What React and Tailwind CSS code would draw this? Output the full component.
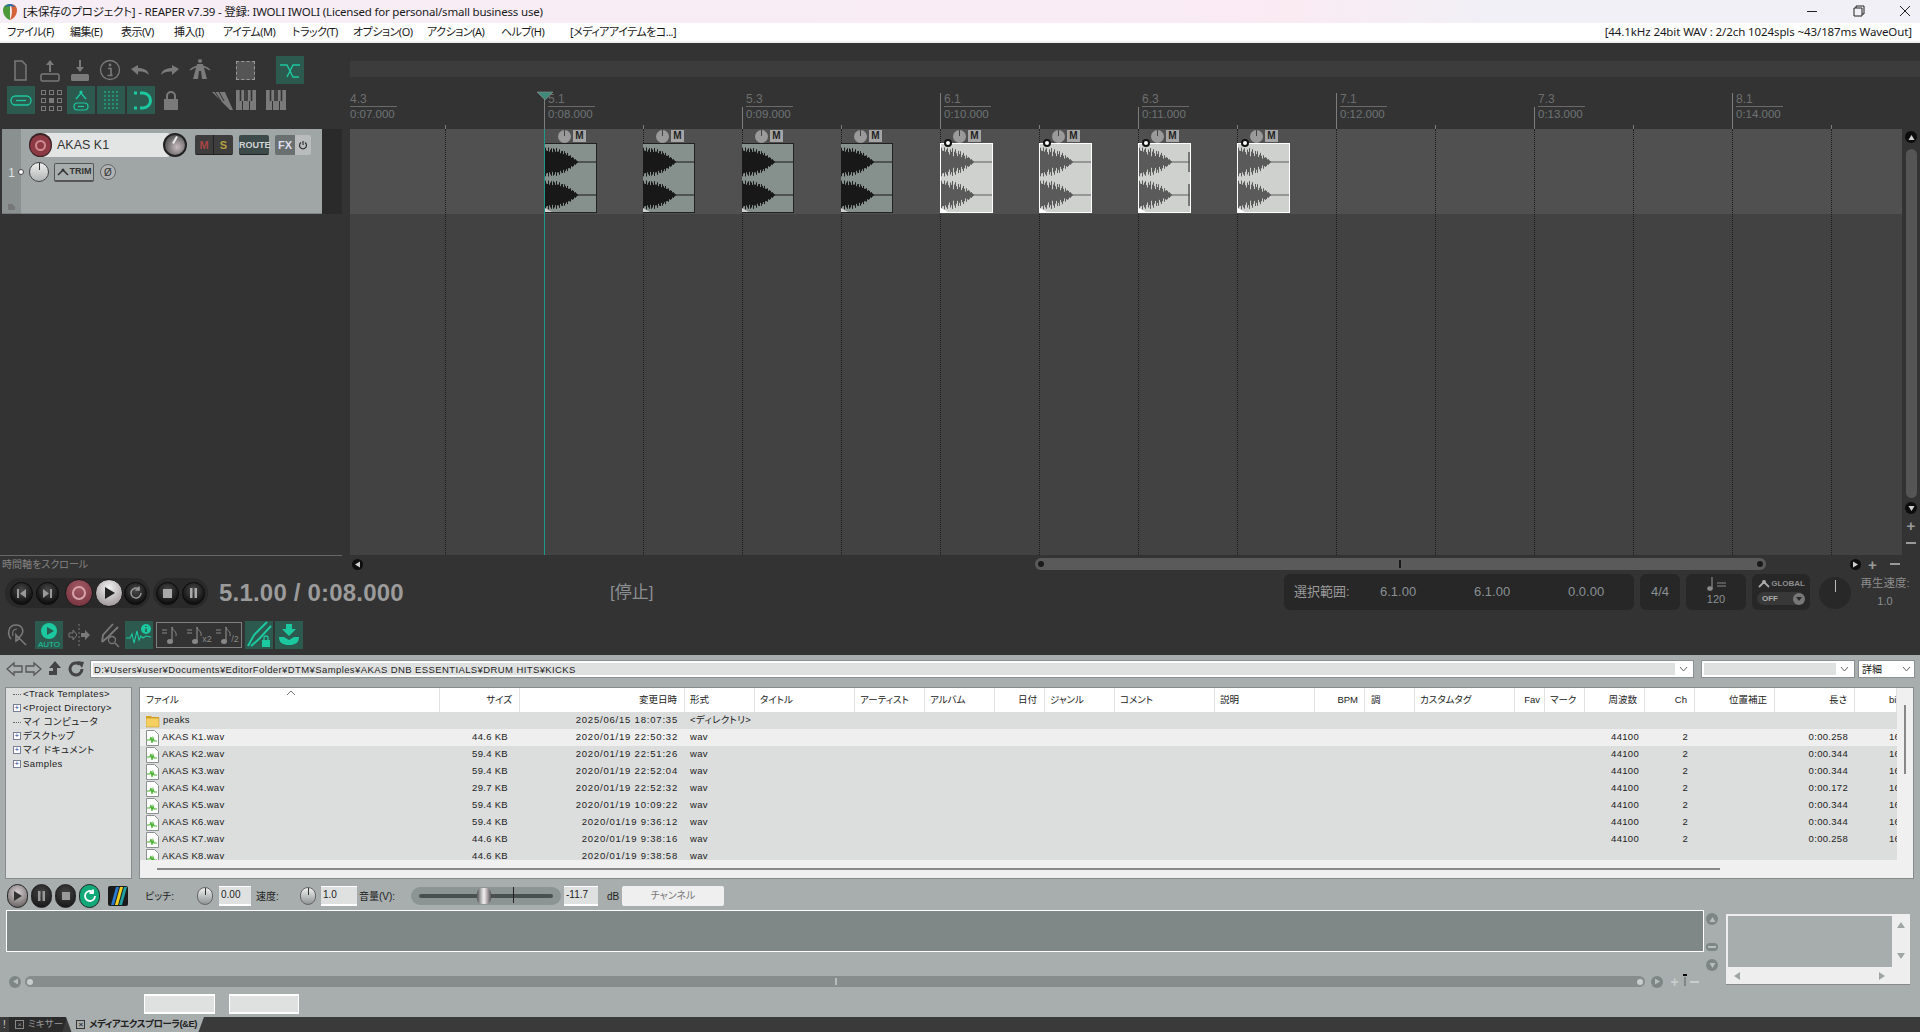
import React from "react";

const TEAL = "#1cc8a0";
const GR = "#7a7a7a";

function Slot({ w = "w-[30px]", active, children }) {
  return (
    <div className={`${w} h-[28px] flex items-center justify-center shrink-0`}>
      <div className={`w-[28px] h-[28px] flex items-center justify-center ${active ? "bg-[#2c5a4f]" : ""}`}>{children}</div>
    </div>
  );
}
const S = ({ children, w = 24, h = 24 }) => (
  <svg width={w} height={h} viewBox={`0 0 ${w} ${h}`} fill="none">{children}</svg>
);

function Row1() {
  return (
    <div className="flex h-[28px] pl-[5px]">
      <Slot><S><path d="M7 3h7l4 4v15H7z" stroke={GR} strokeWidth="1.5" fill="#3a3a3a" /></S></Slot>
      <Slot><S><path d="M12 2l-4 5h3v7h2V7h3z" fill={GR} /><rect x="3" y="16" width="18" height="7" rx="1.5" stroke={GR} strokeWidth="1.5" /></S></Slot>
      <Slot><S><path d="M12 14l-4-5h3V2h2v7h3z" fill={GR} /><rect x="3" y="16" width="18" height="7" rx="1.5" fill={GR} /></S></Slot>
      <Slot><S><circle cx="12" cy="12" r="9.5" stroke={GR} strokeWidth="1.3" /><circle cx="12" cy="7" r="1.4" fill={GR} /><path d="M10 10.5h3V17h1.5M9.5 17.5h5" stroke={GR} strokeWidth="1.6" /></S></Slot>
      <Slot><S><path d="M3 11l7-4v3c6 0 10 2 11 7-3-3-6-3.500-11-3.500V17z" fill={GR} /></S></Slot>
      <Slot><S><path d="M21 11l-7-4v3C8 10 4 12 3 17c3-3 6-3.500 11-3.500V17z" fill={GR} /></S></Slot>
      <Slot><S><path d="M9 6h6l4 15h-5l-1-8h-2l-1 8H5z" fill={GR} /><path d="M2 12c4-3 6-4 10-4s6 1 10 4" stroke={GR} strokeWidth="1.5" /><circle cx="12" cy="3" r="2" fill={GR} /></S></Slot>
      <div className="w-[30px] ml-[15px] h-[28px] flex items-center justify-center">
        <div className="w-[19px] h-[19px] bg-[#555] border border-dashed border-[#9a9a9a]" />
      </div>
      <div className="ml-[16px]"><Slot w="w-[28px]" active><S><path d="M2 7h7l6 12h6M22 7h-7L9 19" stroke={TEAL} strokeWidth="1.4" /></S></Slot></div>
    </div>
  );
}
function Row2() {
  return (
    <div className="flex h-[28px] pl-[6px] mt-[2px]">
      <Slot active><S><rect x="2" y="8" width="20" height="9" rx="4.500" stroke={TEAL} strokeWidth="1.3" /><path d="M7 12.500h10" stroke={TEAL} strokeWidth="1.3" /></S></Slot>
      <Slot>
        <div className="grid grid-cols-3 gap-[3px]">
          {[0, 1, 2, 3, 4, 5, 6, 7, 8].map((i) => (
            <div key={i} className={`w-[5px] h-[5px] border border-[#7a7a7a] ${i === 4 ? "bg-[#7a7a7a]" : ""}`} />
          ))}
        </div>
      </Slot>
      <Slot active><S><path d="M7 11l5-6 5 6" stroke={TEAL} strokeWidth="1.4" /><circle cx="12" cy="4" r="1.6" fill={TEAL} /><rect x="5" y="15" width="14" height="7" rx="3.500" stroke={TEAL} strokeWidth="1.2" /><path d="M9 18.500h6" stroke={TEAL} strokeWidth="1.2" /></S></Slot>
      <Slot active><S>{[6, 10, 14, 18].map((x) => <path key={x} d={`M${x} 3v18`} stroke={TEAL} strokeWidth="1" strokeDasharray="2 2" />)}</S></Slot>
      <Slot active><S><path d="M11 5h3a7.500 7.500 0 010 15h-3" stroke={TEAL} strokeWidth="3" /><path d="M5 5h3M5 20h3" stroke={TEAL} strokeWidth="3" /></S></Slot>
      <Slot><S><path d="M8 11V8a4 4 0 018 0v3" stroke={GR} strokeWidth="2" /><rect x="5" y="11" width="14" height="11" fill={GR} /></S></Slot>
      <div className="ml-[24px] w-[24px] h-[28px] flex items-center justify-center">
        <S><path d="M2 4h13l8 18h-3z" fill={GR} /><path d="M5 4l6 9M9 4l5 9" stroke="#333" strokeWidth="1" /></S>
      </div>
      <Piano />
      <div className="w-[6px]" />
      <Piano />
    </div>
  );
}
const Piano = () => (
  <div className="w-[24px] h-[28px] flex items-center justify-center">
    <S w={20} h={22}><rect x="0" y="1" width="20" height="20" fill={GR} /><path d="M6.500 21V12M13.500 21V12" stroke="#333" /><path d="M4.500 1v11M9 1v11M11 1v11M15.500 1v11" stroke="#333" strokeWidth="1.600" /></S>
  </div>
);

function TrackPanel() {
  return (
    <div className="flex h-[85px]">
      <div className="ml-[2px] w-[320px] bg-[#a0a6a6] flex">
        <div className="w-[19px] bg-[#8a9090] flex flex-col items-center justify-end pb-[2px] border-b border-[#777]">
          <span className="text-[#dfe3e3] text-[12px] mt-[35px] mb-auto">1</span>
          <svg width="10" height="8"><path d="M1 1h4l3 3v3H1z" fill="#777" /></svg>
        </div>
        <div className="flex-1 pt-[4px] border-b border-[#808686]">
          <div className="flex items-center h-[24px]">
            <div className="relative w-[130px] h-[24px] ml-[19px] bg-[#e3e5e4] rounded-r-[3px] flex items-center pl-[17px] text-[12.500px] text-[#333] shrink-0">AKAS K1</div>
            <div className="-ml-[141px] w-[23px] h-[24px] z-10 rounded-full bg-[#3a2226] flex items-center justify-center shrink-0">
              <div className="w-[21px] h-[21px] rounded-full bg-[#8e3a44] flex items-center justify-center">
                <div className="w-[11px] h-[11px] rounded-full border-2 border-[#cf8a92]" />
              </div>
            </div>
            <div className="ml-[111px] z-10 w-[24px] h-[24px] rounded-full bg-[radial-gradient(circle_at_60%_60%,#c8bcc0,#5a5a5a_70%)] border-2 border-[#222] flex items-start justify-center shrink-0">
              <div className="w-[2px] h-[8px] bg-[#eee] rotate-[30deg] mt-[1px]" />
            </div>
            <div className="ml-[8px] flex h-[20px] rounded-[2px] bg-[#3d3d3d] border-b border-[#222] text-[11px] font-bold shrink-0">
              <span className="w-[19px] text-center text-[#a44] leading-[20px] border-r border-[#222]">M</span>
              <span className="w-[19px] text-center text-[#b8a040] leading-[20px]">S</span>
            </div>
            <div className="ml-[6px] w-[30px] h-[20px] rounded-[2px] bg-[#3d4a4a] border-b border-[#222] text-[#cfd4d4] text-[9px] font-bold leading-[20px] text-center shrink-0">ROUTE</div>
            <div className="ml-[6px] w-[36px] h-[20px] flex rounded-[2px] overflow-hidden text-[11px] font-bold shrink-0">
              <span className="w-[20px] bg-[#6a6f6f] text-[#dde] text-center leading-[20px]">FX</span>
              <span className="flex-1 bg-[#b8bcbc] flex items-center justify-center">
                <svg width="10" height="10"><path d="M3 2.500a3.500 3.500 0 104 0M5 1v4" stroke="#333" strokeWidth="1.200" fill="none" /></svg>
              </span>
            </div>
          </div>
          <div className="flex items-center h-[20px] mt-[5px]">
            <div className="w-[6px] h-[6px] rounded-full bg-white border border-[#444] -ml-[3px] shrink-0" />
            <div className="ml-[5px] w-[20px] h-[20px] rounded-full bg-[linear-gradient(#eee,#b0b4b4)] border border-[#444] flex justify-center shrink-0">
              <div className="w-[1px] h-[7px] bg-[#333]" />
            </div>
            <div className="ml-[5px] w-[40px] h-[19px] rounded-[2px] bg-[#a8aeae] border border-[#555] border-b-2 flex items-center justify-center gap-[1px] text-[9px] text-[#333] font-bold shrink-0">
              <svg width="12" height="8"><path d="M1 7l5-5 5 5" stroke="#333" strokeWidth="1.500" fill="none" /><circle cx="6" cy="2" r="1.500" fill="#333" /></svg>TRIM
            </div>
            <div className="ml-[6px] w-[16px] h-[16px] rounded-full bg-[#b0b4b4] border border-[#666] text-[10px] text-[#333] flex items-center justify-center shrink-0">Ø</div>
          </div>
        </div>
      </div>
      <div className="w-[20px] bg-[#2a2a2a]" />
    </div>
  );
}

function wave(cy, w, selected) {
  let d = "";
  for (let x = 0.5; x < w; x += 1) {
    let a;
    if (x < 10) a = 14.5;
    else if (x < 20) a = 14.5 - (x - 10) * 0.35;
    else if (x < 28) a = 11 - (x - 20) * 0.75;
    else if (x < 33) a = 5 - (x - 28) * 0.85;
    else a = 0.5;
    if (x < 33) a *= 0.84 + 0.16 * Math.sin(x * 2.3);
    if (selected && x > 5 && x < 26 && Math.floor(x) % 4 === 0) a *= 0.55;
    d += `M${x} ${cy - a}V${cy + a}`;
  }
  return d;
}

function Clip({ i }) {
  const sel = i >= 4;
  return (
    <div className={`flex flex-col h-[85px] ${i === 0 ? "" : "-ml-px"}`}>
      <div className="h-[14px] flex items-start pt-[1px]">
        <div className="ml-[13px] w-[13px] h-[13px] rounded-full bg-[#9a9a9a] flex justify-center shrink-0"><div className="w-px h-[6px] bg-[#444]" /></div>
        <div className="ml-[2px] w-[13px] h-[12px] bg-[#a5a5a5] text-[#222] text-[10px] font-bold leading-[12px] text-center shrink-0">M</div>
      </div>
      <div className={`relative h-[70px] ${sel ? "w-[53px] bg-[#cfd1cf] border border-white" : "w-[52px] bg-[#86908d] border border-[#222] border-l-0"}`}>
        <svg width="51" height="68" className="block">
          <path d={wave(18, 51, sel) + wave(51, 51, sel)} stroke={sel ? "#5a5a5a" : "#181818"} strokeWidth="1" />
          {i === 6 && <path d="M50 8v20M50 40v22" stroke="#5a5a5a" strokeWidth="1.500" />}
          <path d="M0 68l7 0-7-4z" fill={sel ? "#fff" : "#d0d0d0"} />
        </svg>
        {sel && <div className="absolute left-0 top-[-5px] ml-[3px] w-[8px] h-[8px] rounded-full bg-white border-2 border-[#111]" />}
      </div>
    </div>
  );
}

const beats = Array.from({ length: 16 }, (_, i) => i);
const rulerLabels = { 1: ["5.1", "0:08.000"], 3: ["5.3", "0:09.000"], 5: ["6.1", "0:10.000"], 7: ["6.3", "0:11.000"], 9: ["7.1", "0:12.000"], 11: ["7.3", "0:13.000"], 13: ["8.1", "0:14.000"] };

function Label({ a, b }) {
  return (
    <div className="pl-[3px] w-[50px] pb-[7px]">
      <div className="text-[12px] leading-[14px] text-[#6e6e6e] border-b border-[#6a6a6a]">{a}</div>
      <div className="text-[11.500px] leading-[15px] text-[#6e7476]">{b}</div>
    </div>
  );
}

function Ruler() {
  return (
    <div className="flex h-[52px] items-end overflow-hidden">
      <div className="w-[95px] shrink-0 -ml-[3px]"><Label a="4.3" b="0:07.000" /></div>
      <div className="w-[3px] shrink-0" />
      {beats.slice(0, 15).map((i) => {
        const major = rulerLabels[i];
        const h = i % 2 === 0 ? "h-[4px]" : i % 4 === 1 ? "h-[36px]" : "h-[22px]";
        return (
          <div key={i} className="relative w-[99px] shrink-0 flex items-end">
            <div className={`w-px ${h} bg-[#7d7d7d] shrink-0`} />
            {major && <Label a={major[0]} b={major[1]} />}
            {i === 1 && (
              <svg width="18" height="10" className="absolute left-[-8px] bottom-[28px]"><path d="M1 1h16l-8 8z" fill="#3f8a7b" stroke="#888" strokeWidth="0.700" /></svg>
            )}
          </div>
        );
      })}
    </div>
  );
}

function Arrange() {
  return (
    <div className="relative w-[1552px] h-[426px] bg-[#424242] overflow-hidden">
      <div className="h-[85px] bg-[#505050]" />
      <div className="absolute inset-0 flex">
        <div className="w-[95px] shrink-0" />
        {beats.map((i) => {
          const cur = i === 1;
          return (
            <div key={i} className={`relative w-[99px] shrink-0 border-l ${cur ? "border-solid border-[#1d9a87]" : "border-dotted border-[#1c1c1c]"}`}>
              {i >= 1 && i <= 8 && <Clip i={i - 1} />}
            </div>
          );
        })}
      </div>
    </div>
  );
}

const Cb = ({ cls, children }) => (
  <div className={`rounded-full flex items-center justify-center shrink-0 ${cls}`}>{children}</div>
);

function ScrollBtn({ dir = "up", color = "#d0d0d0", size = "w-[11px] h-[11px]", bg = "bg-[#0d0d0d]" }) {
  const p = { up: "M4.500 2l3 5h-6z", down: "M4.500 7l3-5h-6z", left: "M2 4.500l5-3v6z", right: "M7 4.500l-5-3v6z" }[dir];
  return <Cb cls={`${size} ${bg}`}><svg width="9" height="9"><path d={p} fill={color} /></svg></Cb>;
}

const tBtn = "w-[23px] h-[23px] bg-[radial-gradient(circle_at_50%_35%,#4a4a4a,#101010_75%)] border border-[#0b0b0b]";

function Transport() {
  return (
    <div className="flex items-center h-[38px]">
      <div className="flex items-center">
        <div className="ml-[5px] h-[30px] w-[145px] rounded-full bg-[#292929] flex items-center pl-[5px] gap-[3px] shrink-0">
          <Cb cls={tBtn}><svg width="11" height="11"><path d="M1 1h2v9H1zM10 1v9L4 5.500z" fill="#999" /></svg></Cb>
          <Cb cls={tBtn}><svg width="11" height="11"><path d="M8 1h2v9H8zM1 1v9l6-4.500z" fill="#999" /></svg></Cb>
          <Cb cls="w-[28px] h-[28px] bg-[radial-gradient(circle_at_50%_30%,#a35a66,#6f2e38)] border border-[#1a1a1a] ml-[3px]"><div className="w-[14px] h-[14px] rounded-full border-2 border-[#d8a4ac]" /></Cb>
          <Cb cls="w-[28px] h-[28px] bg-[radial-gradient(circle_at_50%_30%,#f2f2f2,#8e8488)] border border-[#1a1a1a] -ml-[1px]"><svg width="14" height="14"><path d="M3 1l10 6-10 6z" fill="#222" /></svg></Cb>
          <Cb cls={`${tBtn} -ml-[2px]`}><svg width="14" height="14"><path d="M12 7a5 5 0 11-2-4M10 .5V4H6.500" stroke="#999" strokeWidth="1.500" fill="none" /></svg></Cb>
        </div>
        <div className="ml-[3px] h-[30px] w-[55px] rounded-full bg-[#292929] flex items-center justify-center gap-[3px] shrink-0">
          <Cb cls={tBtn}><div className="w-[9px] h-[9px] bg-[#aaa]" /></Cb>
          <Cb cls={tBtn}><svg width="9" height="10"><path d="M1 0h2.500v10H1zM5.500 0H8v10H5.500z" fill="#aaa" /></svg></Cb>
        </div>
      </div>
      <div className="ml-[11px] w-[391px] shrink-0 text-[24px] font-bold text-[#9b9b9b] leading-none tracking-[0.200px] font-['Liberation_Sans',sans-serif]">5.1.00 / 0:08.000</div>
      <div className="w-[674px] shrink-0 text-[17px] text-[#8b8f92]">[停止]</div>
      <div className="w-[350px] h-[36px] self-start bg-[#272727] rounded-[6px] flex items-center text-[13px] text-[#8a9094] shrink-0">
        <span className="w-[96px] pl-[10px] text-[#9a9a9a]">選択範囲:</span>
        <span className="w-[94px]">6.1.00</span>
        <span className="w-[94px]">6.1.00</span>
        <span>0.0.00</span>
      </div>
      <div className="ml-[6px] w-[40px] h-[36px] self-start bg-[#272727] rounded-[6px] flex items-center justify-center text-[13px] text-[#8a9094] shrink-0">4/4</div>
      <div className="ml-[6px] w-[60px] h-[36px] self-start bg-[#272727] rounded-[6px] flex flex-col items-center text-[11px] text-[#8a9094] shrink-0">
        <svg width="24" height="16" className="mt-[2px]"><path d="M8 1v11" stroke="#888" strokeWidth="1.200" /><ellipse cx="6" cy="12.500" rx="2.800" ry="2.300" fill="#888" /><path d="M13 7h9M13 10h9" stroke="#888" strokeWidth="1.200" /></svg>
        <span className="leading-[14px]">120</span>
      </div>
      <div className="ml-[6px] w-[58px] h-[36px] self-start bg-[#272727] rounded-[6px] flex flex-col px-[5px] pt-[3px] shrink-0 text-[8px] font-bold text-[#8d8d8d]">
        <div className="flex items-center gap-[1px] h-[14px]"><svg width="14" height="10"><path d="M2 8l5-5 5 5" stroke="#aaa" strokeWidth="1.800" fill="none" /><circle cx="7" cy="3" r="2" fill="#aaa" /></svg>GLOBAL</div>
        <div className="h-[13px] mt-[1px] rounded-full bg-[#383838] flex items-center justify-between pl-[5px] text-[#aaa]">OFF<Cb cls="w-[12px] h-[12px] bg-[#777]"><svg width="8" height="6"><path d="M1 1h6L4 5z" fill="#2a2a2a" /></svg></Cb></div>
      </div>
      <div className="ml-[9px] w-[32px] h-[32px] self-start mt-[3px] rounded-full bg-[#282828] flex justify-center pt-[3px] shrink-0"><div className="w-px h-[12px] bg-[#bbb]" /></div>
      <div className="ml-[6px] w-[56px] flex flex-col items-center text-[#8b8b8b] text-[11.500px] leading-[18px] -mt-[2px] shrink-0">
        <span className="whitespace-nowrap">再生速度:</span>
        <span className="text-[11px] text-[#8a9094]">1.0</span>
      </div>
    </div>
  );
}

function NoteIcon({ tag }) {
  return (
    <div className="w-[28px] h-[26px] flex items-center justify-center text-[#888] text-[9px] shrink-0">
      <svg width="20" height="22"><path d="M1 6h5M1 9h5" stroke="#888" /><path d="M11 3v14" stroke="#888" strokeWidth="1.200" /><path d="M11 3c1 4 5 4 4 9" stroke="#888" fill="none" /><ellipse cx="9" cy="17.500" rx="3" ry="2.500" fill="#888" /></svg>
      {tag && <span className="-ml-[4px] mt-[10px]">{tag}</span>}
    </div>
  );
}

function Row3() {
  return (
    <div className="flex items-center h-[28px] mt-[9px] pl-[3px]">
      <div className="w-[28px] h-[28px] flex items-center justify-center shrink-0">
        <svg width="24" height="26" fill="none"><path d="M6 17C2 12 3 3 11 3c6 0 8 5 6 9l-3 4" stroke={GR} strokeWidth="1.500" /><path d="M8 14c-1-4 0-7 4-7" stroke={GR} strokeWidth="1.200" /><path d="M11 13l10 10M11 13v6l3-2z" stroke={GR} strokeWidth="1.600" /></svg>
      </div>
      <div className="ml-[4px] w-[28px] h-[28px] bg-[#2c5a4f] flex flex-col items-center text-[8px] text-[#1cc8a0] shrink-0 leading-[9px]">
        <div className="mt-[2px] w-[16px] h-[16px] rounded-full bg-[#1cc8a0] flex items-center justify-center"><div className="border-y-[4px] border-y-transparent border-l-[7px] border-l-[#2c5a4f] ml-[2px]" /></div>
        <span className="mt-[1px]">AUTO</span>
      </div>
      <div className="ml-[2px] w-[28px] h-[28px] flex items-center justify-center shrink-0">
        <svg width="24" height="24" fill="none"><path d="M12 1v22" stroke={GR} strokeDasharray="2 2" /><path d="M2 10h4V7l4 5-4 5v-3H2z" stroke={GR} /><path d="M14 10h4V7l5 5-5 5v-3h-4z" fill={GR} /></svg>
      </div>
      <div className="ml-[1px] w-[28px] h-[28px] flex items-center justify-center shrink-0">
        <svg width="26" height="26" fill="none"><path d="M18 2L8 13l-1 7M23 5L13 15l-6 5" stroke={GR} strokeWidth="1.800" /><circle cx="17" cy="18" r="3.500" stroke={GR} strokeWidth="1.300" /><path d="M20 21l4 4" stroke={GR} strokeWidth="1.500" /></svg>
      </div>
      <div className="ml-[3px] w-[28px] h-[28px] bg-[#2c5a4f] flex items-center justify-center shrink-0">
        <svg width="28" height="28" fill="none"><path d="M1 17h4l2-4 2 9 3-12 2 9 2-4 2 2 3-2 5 1" stroke={TEAL} strokeWidth="1.100" /><circle cx="21" cy="8" r="5" fill={TEAL} /><path d="M21 5v1M21 7.500V11" stroke="#2c5a4f" strokeWidth="1.600" /></svg>
      </div>
      <div className="ml-[3px] w-[86px] h-[26px] border border-[#808080] flex items-center shrink-0">
        <NoteIcon /><NoteIcon tag="x2" /><NoteIcon tag="/2" />
      </div>
      <div className="ml-[3px] w-[28px] h-[28px] bg-[#2c5a4f] flex items-center justify-center shrink-0">
        <svg width="28" height="28" fill="none"><path d="M22 1L9 14l-6 11M26 5L14 18l-8 7" stroke={TEAL} strokeWidth="2" /><rect x="17" y="19" width="8" height="7" fill={TEAL} /><path d="M19 19v-2a2 2 0 014 0v2" stroke={TEAL} strokeWidth="1.300" /></svg>
      </div>
      <div className="ml-[2px] w-[28px] h-[28px] bg-[#2c5a4f] flex items-center justify-center shrink-0">
        <svg width="26" height="26" fill="none"><path d="M10 2h6v5h4l-7 7-7-7h4z" fill={TEAL} /><path d="M3 15h5l5 3 5-3h5c0 6-4 8-10 8S3 21 3 15z" fill={TEAL} /></svg>
      </div>
    </div>
  );
}

function Nav() {
  const I = (p) => <svg width="18" height="18" fill="none" className="shrink-0">{p.children}</svg>;
  return (
    <div className="h-[32px] flex items-center pl-[6px] pb-[4px]">
      <I><path d="M1 9l7-6v3h8v6H8v3z" stroke="#555" strokeWidth="1.300" /></I>
      <I><path d="M17 9l-7-6v3H2v6h8v3z" stroke="#555" strokeWidth="1.300" /></I>
      <div className="w-[4px] shrink-0" />
      <I><path d="M9 1l6 7h-4v7H3v-4h4V8H3z" fill="#444" /></I>
      <div className="w-[3px] shrink-0" />
      <I><path d="M15 9a6 6 0 11-2-4.500" stroke="#444" strokeWidth="3" /><path d="M10 1l7 1-2 6z" fill="#444" /></I>
      <div className="ml-[5px] w-[1604px] h-[18px] bg-white border border-[#8b9090] flex p-[2px] shrink-0">
        <div className="flex-1 bg-[#dfe1e0] text-[9.500px] leading-[13px] text-[#222] pl-[1px] tracking-[0.400px] font-['Liberation_Sans',sans-serif]">D:¥Users¥user¥Documents¥EditorFolder¥DTM¥Samples¥AKAS DNB ESSENTIALS¥DRUM HITS¥KICKS</div>
        <Chev />
      </div>
      <div className="ml-[7px] w-[154px] h-[18px] bg-white border border-[#8b9090] flex p-[2px] shrink-0">
        <div className="flex-1 bg-[#dfe1e0]" /><Chev />
      </div>
      <div className="ml-[3px] w-[57px] h-[18px] bg-white border border-[#8b9090] flex items-center pl-[3px] text-[10px] text-[#111] shrink-0">
        <span className="flex-1">詳細</span><Chev />
      </div>
    </div>
  );
}
const Chev = () => (
  <svg width="16" height="12" className="shrink-0"><path d="M5 4l3.500 4L12 4" stroke="#666" fill="none" /></svg>
);

function Tree() {
  const items = [
    ["<Track Templates>", false],
    ["<Project Directory>", true],
    ["マイ コンピュータ", false],
    ["デスクトップ", true],
    ["マイ ドキュメント", true],
    ["Samples", true],
  ];
  return (
    <div className="w-[127px] ml-[5px] h-[192px] bg-[#dcdedd] border border-[#868b8b] shrink-0">
      <div className="-mt-[1px]">
        {items.map(([t, plus]) => (
          <div key={t} className="h-[14px] flex items-center text-[9.500px] text-[#222] whitespace-nowrap tracking-[0.400px]">
            <div className="w-[7px] shrink-0" />
            {plus ? (
              <div className="w-[8px] h-[8px] bg-white border border-[#7a7f99] text-[8px] leading-[6px] text-center text-[#223a9a] shrink-0">+</div>
            ) : (
              <div className="w-[8px] h-px border-t border-dotted border-[#666] shrink-0" />
            )}
            <span className="ml-[2px]">{t}</span>
          </div>
        ))}
      </div>
    </div>
  );
}

const COLS = "grid grid-cols-[300px_80px_165px_70px_100px_70px_70px_50px_70px_100px_100px_50px_50px_100px_30px_40px_60px_50px_80px_80px_42px]";
const HEAD = [
  ["ファイル", "pl-[6px]"], ["サイズ", "text-right pr-[7px]"], ["変更日時", "text-right pr-[7px]"], ["形式", "pl-[5px]"],
  ["タイトル", "pl-[5px]"], ["アーティスト", "pl-[5px]"], ["アルバム", "pl-[5px]"], ["日付", "text-right pr-[7px]"],
  ["ジャンル", "pl-[5px]"], ["コメント", "pl-[5px]"], ["説明", "pl-[5px]"], ["BPM", "text-right pr-[6px]"], ["調", "pl-[6px]"],
  ["カスタムタグ", "pl-[5px]"], ["Fav", "text-right pr-[4px]"], ["マーク", "pl-[5px]"], ["周波数", "text-right pr-[7px]"],
  ["Ch", "text-right pr-[7px]"], ["位置補正", "text-right pr-[7px]"], ["長さ", "text-right pr-[7px]"], ["bit", "pl-[34px]"],
];
const ROWS = [
  ["peaks", "", "2025/06/15 18:07:35", "<ディレクトリ>", "", "", ""],
  ["AKAS K1.wav", "44.6 KB", "2020/01/19 22:50:32", "wav", "44100", "2", "0:00.258", "16"],
  ["AKAS K2.wav", "59.4 KB", "2020/01/19 22:51:26", "wav", "44100", "2", "0:00.344", "16"],
  ["AKAS K3.wav", "59.4 KB", "2020/01/19 22:52:04", "wav", "44100", "2", "0:00.344", "16"],
  ["AKAS K4.wav", "29.7 KB", "2020/01/19 22:52:32", "wav", "44100", "2", "0:00.172", "16"],
  ["AKAS K5.wav", "59.4 KB", "2020/01/19 10:09:22", "wav", "44100", "2", "0:00.344", "16"],
  ["AKAS K6.wav", "59.4 KB", "2020/01/19 9:36:12", "wav", "44100", "2", "0:00.344", "16"],
  ["AKAS K7.wav", "44.6 KB", "2020/01/19 9:38:16", "wav", "44100", "2", "0:00.258", "16"],
  ["AKAS K8.wav", "44.6 KB", "2020/01/19 9:38:58", "wav", "", "", "", ""],
];

function FileIcon({ dir }) {
  if (dir)
    return (
      <svg width="14" height="14" className="shrink-0"><path d="M0 2h5l1 1h7v10H0z" fill="#d9a520" /><path d="M0 4h13v9H0z" fill="#f5cf62" stroke="#b78a1a" strokeWidth="0.500" /></svg>
    );
  return (
    <svg width="13" height="16" className="shrink-0"><path d="M.5.5h8l4 4v11H.5z" fill="#fff" stroke="#8a8f8f" /><path d="M1 10h3l1-3 1 6 1-5 1 3h3" stroke="#46b02c" strokeWidth="1.100" fill="none" /></svg>
  );
}

function FileList() {
  return (
    <div className="ml-[7px] w-[1775px] h-[192px] bg-[#f0f0f0] border border-[#868b8b] flex shrink-0">
      <div className="w-[1757px] shrink-0">
        <div className={`${COLS} relative h-[24px] bg-white text-[9.500px] leading-[23px] text-[#222]`}>
          {HEAD.map(([t, c]) => (
            <div key={t} className={`${c} border-r border-[#e2e2e2] overflow-hidden whitespace-nowrap`}>{t}</div>
          ))}
          <svg width="10" height="6" className="absolute left-[146px] top-[2px]"><path d="M1 5l4-4 4 4" stroke="#777" fill="none" /></svg>
        </div>
        <div className="h-[148px] overflow-hidden bg-[#dcdedd]">
          {ROWS.map((r, i) => (
            <div key={r[0]} className={`${COLS} h-[17px] items-center text-[9.500px] text-[#222] whitespace-nowrap tracking-[0.300px] ${i === 1 ? "bg-[#efefef]" : ""}`}>
              <div className="flex items-center pl-[6px] gap-[3px] overflow-hidden h-[17px]"><FileIcon dir={i === 0} />{r[0]}</div>
              <div className="text-right pr-[12px]">{r[1]}</div>
              <div className="text-right pr-[7px] tracking-[0.800px]">{r[2]}</div>
              <div className="pl-[5px] col-span-13">{r[3]}</div>
              <div className="text-right pr-[6px]">{r[4]}</div>
              <div className="text-right pr-[7px]">{r[5]}</div>
              <div />
              <div className="text-right pr-[7px]">{r[6]}</div>
              <div className="pl-[34px] overflow-hidden">{r[7]}</div>
            </div>
          ))}
        </div>
        <div className="h-[18px] pl-[17px] pt-[8px]"><div className="w-[1563px] h-[2px] bg-[#888]" /></div>
      </div>
      <div className="ml-[7px] mt-[17px] w-[2px] h-[69px] bg-[#888]" />
    </div>
  );
}

const GBtn = ({ dir, cls = "" }) => <ScrollBtn dir={dir} color="#b8bdbd" bg={`bg-[#7e8585] ${cls}`} size="w-[12px] h-[12px]" />;

function Preview() {
  const pBtn = "w-[21px] h-[24px] border border-[#222]";
  const pBox = "h-[20px] bg-[#dfe1e0] border-b-2 border-white border-t border-t-white text-[10px] text-[#222] px-[2px] leading-[15px] shrink-0";
  const knob = "w-[16px] h-[18px] rounded-full bg-[linear-gradient(#eef0ef,#8f9595)] border border-[#666] flex justify-center shrink-0";
  const label = "text-[10px] text-[#222] shrink-0";
  return (
    <div className="h-[31px] pt-[3px] flex items-center pl-[7px] gap-0">
      <div className="flex gap-[3px]">
        <Cb cls={`${pBtn} bg-[radial-gradient(circle_at_50%_35%,#d8d0d4,#55514f)]`}><svg width="10" height="12"><path d="M1 1l8 5-8 5z" fill="#333" /></svg></Cb>
        <Cb cls={`${pBtn} bg-[radial-gradient(circle_at_50%_35%,#444,#111)]`}><svg width="9" height="10"><path d="M1 0h2.500v10H1zM5.500 0H8v10H5.500z" fill="#999" /></svg></Cb>
        <Cb cls={`${pBtn} bg-[radial-gradient(circle_at_50%_35%,#444,#111)]`}><div className="w-[8px] h-[8px] bg-[#999]" /></Cb>
        <Cb cls={`${pBtn} bg-[#12a878]`}><svg width="14" height="14"><path d="M12 7a5 5 0 11-2-4M10 .5V4H6.500" stroke="#fff" strokeWidth="1.800" fill="none" /></svg></Cb>
      </div>
      <svg width="20" height="20" className="ml-[8px] shrink-0"><rect width="20" height="20" rx="2" fill="#1a1a1a" /><path d="M3 19L8 1h3L6 19z" fill="#2a7ad0" /><path d="M7 19L12 1h3l-5 18z" fill="#f0d020" /><path d="M11 19L16 1h3l-5 18z" fill="#20a0a0" /></svg>
      <span className={`${label} ml-[17px] w-[50px]`}>ピッチ:</span>
      <div className={`${knob} ml-[2px]`}><div className="w-px h-[7px] bg-[#333]" /></div>
      <div className={`${pBox} ml-[6px] w-[32px]`}>0.00</div>
      <span className={`${label} ml-[5px] w-[44px]`}>速度:</span>
      <div className={knob}><div className="w-px h-[7px] bg-[#333]" /></div>
      <div className={`${pBox} ml-[5px] w-[36px]`}>1.0</div>
      <span className={`${label} ml-[2px] w-[52px]`}>音量(V):</span>
      <div className="relative w-[150px] h-[18px] rounded-full bg-[#8d9494] flex items-center px-[8px] shrink-0">
        <div className="w-full h-[4px] rounded-full bg-[#4a4f4f]" />
        <div className="absolute left-[102px] top-0 w-px h-[16px] bg-[#222]" />
        <div className="absolute left-[66px] top-[1px] w-[14px] h-[16px] rounded-[5px] bg-[linear-gradient(90deg,#555,#e8e8e8_45%,#e8e0e4_55%,#555)]" />
      </div>
      <div className={`${pBox} ml-[3px] w-[34px]`}>-11.7</div>
      <span className={`${label} ml-[9px] w-[15px]`}>dB</span>
      <div className="w-[102px] h-[20px] bg-[#efefef] rounded-[2px] text-center text-[10px] leading-[20px] text-[#777] shrink-0">チャンネル</div>
    </div>
  );
}

function Lower() {
  return (
    <div className="flex h-[107px]">
      <div className="w-[1726px] flex flex-col shrink-0">
        <div className="flex h-[66px]">
          <div className="ml-[6px] w-[1698px] h-[42px] bg-[#808887] border border-white shrink-0" />
          <div className="ml-[2px] flex flex-col items-center w-[12px]">
            <div className="mt-[3px]"><GBtn dir="up" /></div>
            <Cb cls="w-[12px] h-[8px] bg-[#7e8585] mt-[18px]"><div className="w-[8px] h-[2px] bg-[#b8bdbd]" /></Cb>
            <div className="mt-[8px]"><GBtn dir="down" /></div>
          </div>
        </div>
        <div className="flex items-center h-[11px]">
          <div className="ml-[9px]"><GBtn dir="left" /></div>
          <div className="relative ml-[4px] w-[1620px] h-[11px] rounded-full bg-[#868d8c] flex items-center justify-between px-[2px] shrink-0">
            <div className="w-[6px] h-[6px] rounded-full bg-[#c9cdcd]" />
            <div className="absolute left-[810px] top-[2px] w-[2px] h-[7px] bg-[#b8bdbd]" />
            <div className="w-[6px] h-[6px] rounded-full bg-[#c9cdcd]" />
          </div>
          <div className="ml-[6px]"><GBtn dir="right" /></div>
          <span className="ml-[6px] w-[11px] h-[11px] flex items-center justify-center text-[#c9cdcd] font-bold text-[14px] leading-none shrink-0">+</span>
          <div className="relative ml-[4px] w-[2px] h-[9px] bg-[#808787] shrink-0"><div className="absolute -top-[3px] -left-[1px] w-[4px] h-[2px] bg-black" /></div>
          <div className="ml-[4px] w-[9px] h-[2px] bg-[#c9cdcd] shrink-0" />
        </div>
        <div className="flex mt-[7px] ml-[144px] gap-[14px]">
          <div className="w-[71px] h-[20px] bg-[#dfe1e0] border-y-2 border-white border-x border-x-white" />
          <div className="w-[70px] h-[20px] bg-[#dfe1e0] border-y-2 border-white border-x border-x-white" />
        </div>
      </div>
      <div className="mt-[4px] w-[184px] h-[71px] bg-[#eeeeee] border-b border-[#888] flex flex-col shrink-0">
        <div className="flex h-[53px]">
          <div className="ml-[2px] mt-[2px] w-[164px] h-[51px] bg-[#a7adad] shrink-0" />
          <div className="flex-1 flex flex-col items-center justify-between py-[7px]">
            <svg width="10" height="8"><path d="M5 1l4 6H1z" fill="#a0a5a5" /></svg>
            <svg width="10" height="8"><path d="M5 7l4-6H1z" fill="#a0a5a5" /></svg>
          </div>
        </div>
        <div className="flex-1 flex items-center justify-between pl-[7px] pr-[24px]">
          <svg width="8" height="10"><path d="M1 5l6-4v8z" fill="#a0a5a5" /></svg>
          <svg width="8" height="10"><path d="M7 5L1 1v8z" fill="#a0a5a5" /></svg>
        </div>
      </div>
    </div>
  );
}

function Tabs() {
  const Box = ({ c }) => <span className={`w-[9px] h-[9px] border text-[8px] leading-[7px] text-center shrink-0 ${c}`}>×</span>;
  return (
    <div className="h-[15px] bg-[#3a3a3a] flex items-center">
      <span className="w-[9px] pl-[3px] text-[10px] text-[#ccc] shrink-0">!</span>
      <div className="w-[58px] h-[15px] bg-[#2b2b2b] flex items-center pl-[6px] gap-[4px] text-[9.500px] text-[#9a9a9a] whitespace-nowrap [clip-path:polygon(0_0,100%_0,92%_100%,0_100%)] shrink-0">
        <Box c="border-[#888] text-[#888]" />ミキサー
      </div>
      <div className="-ml-[1px] w-[138px] h-[15px] bg-[#a8aeae] flex items-center pl-[10px] gap-[4px] text-[9.500px] tracking-[-0.500px] font-bold text-[#222] whitespace-nowrap [clip-path:polygon(0_0,100%_0,96%_100%,4%_100%)] shrink-0">
        <Box c="border-[#333] text-[#333]" />メディアエクスプローラ(&E)
      </div>
    </div>
  );
}

export default function App() {
  return (
    <div className="w-[1920px] h-[1032px] overflow-hidden flex flex-col bg-[#333] [font-feature-settings:'palt'] font-['Liberation_Sans','Noto_Sans_CJK_JP',sans-serif]">
      <div className="h-[23px] flex items-center bg-[linear-gradient(90deg,#f6eef6,#faebf3_1300px,#f0f0f6_1500px)] font-['Noto_Sans','Noto_Sans_CJK_JP',sans-serif] text-[11.500px] tracking-[-0.200px] text-[#1a1a1a] shrink-0">
        <svg width="16" height="18" className="ml-[2px] shrink-0" viewBox="0 0 16 18">
          <path d="M8 17C3 15 1 11 1 7c0-4 3-6 7-6z" fill="#4e9a3a" />
          <path d="M8 17c5-2 7-6 7-10 0-4-3-6-7-6 2 3 3 9 0 16z" fill="#d4633a" />
          <path d="M3 4c1-2 3-3 5-3s4 1 5 3c-2-1-8-1-10 0z" fill="#2a6fb0" />
        </svg>
        <span className="ml-[5px] whitespace-nowrap">[未保存のプロジェクト] - REAPER v7.39 - 登録: IWOLI IWOLI (Licensed for personal/small business use)</span>
        <div className="ml-auto flex items-center shrink-0">
          <svg width="46" height="23"><path d="M0 11.500h10" stroke="#222" /></svg>
          <svg width="46" height="23"><path d="M1 8h8v8H1zM3 8V6h8v8H9" stroke="#222" fill="none" /></svg>
          <svg width="21" height="23"><path d="M1 6l10 10M11 6L1 16" stroke="#222" /></svg>
        </div>
      </div>

      <div className="h-[20px] bg-white border-b-2 border-[#f0f0f0] flex items-center text-[11px] tracking-[-0.500px] text-[#1a1a1a] whitespace-nowrap shrink-0 font-['Noto_Sans','Noto_Sans_CJK_JP',sans-serif]">
        <span className="ml-[7px] w-[63px]">ファイル(F)</span>
        <span className="w-[51px]">編集(E)</span>
        <span className="w-[53px]">表示(V)</span>
        <span className="w-[49px]">挿入(I)</span>
        <span className="w-[69px]">アイテム(M)</span>
        <span className="w-[61px]">トラック(T)</span>
        <span className="w-[74px]">オプション(O)</span>
        <span className="w-[74px]">アクション(A)</span>
        <span className="w-[69px]">ヘルプ(H)</span>
        <span>[メディアアイテムをコ...]</span>
        <span className="ml-auto pr-[8px] text-[11.500px] tracking-[-0.100px]">[44.1kHz 24bit WAV : 2/2ch 1024spls ~43/187ms WaveOut]</span>
      </div>

      <div className="h-[612px] flex flex-col shrink-0 text-[#888]">
        <div className="h-[512px] flex">
          <div className="w-[350px] shrink-0">
            <div className="h-[86px] pt-[13px]"><Row1 /><Row2 /></div>
            <TrackPanel />
          </div>
          <div className="flex-1 min-w-0 flex">
            <div className="w-[1552px] shrink-0 flex flex-col">
              <div className="mt-[18px] h-[16px] bg-[#3c3c3c] w-[1570px]" />
              <Ruler />
              <Arrange />
            </div>
            <div className="w-[18px] flex flex-col items-center relative">
              <div className="mt-[88px]"><ScrollBtn dir="up" size="w-[12px] h-[12px]" /></div>
              <div className="mt-[6px] w-[11px] h-[349px] rounded-full bg-[#555]" />
              <div className="mt-[4px]"><ScrollBtn dir="down" size="w-[12px] h-[12px]" /></div>
              <span className="mt-[4px] text-[#9a9a9a] text-[15px] leading-[16px] font-bold">+</span>
              <div className="mt-[8px] w-[10px] h-[2px] bg-[#9a9a9a]" />
            </div>
          </div>
        </div>

        <div className="flex h-[18px] shrink-0">
          <div className="w-[350px] shrink-0">
            <div className="w-[342px] h-px bg-[#666]" />
            <div className="pl-[2px] text-[10px] leading-[17px] text-[#838383]">時間軸をスクロール</div>
          </div>
          <div className="flex-1 flex items-center">
            <div className="ml-[2px]"><ScrollBtn dir="left" size="w-[11px] h-[11px]" /></div>
            <div className="relative ml-[672px] w-[731px] h-[12px] rounded-full bg-[#5a5a5a] flex items-center justify-between px-[3px] shrink-0">
              <div className="w-[6px] h-[6px] rounded-full bg-[#1a1a1a]" />
              <div className="absolute left-[364px] top-[2px] w-[2px] h-[8px] bg-[#1a1a1a]" />
              <div className="w-[6px] h-[6px] rounded-full bg-[#1a1a1a]" />
            </div>
            <div className="ml-[84px]"><ScrollBtn dir="right" size="w-[11px] h-[11px]" /></div>
            <span className="ml-[7px] text-[#9a9a9a] text-[15px] leading-none font-bold">+</span>
            <div className="ml-[13px] w-[10px] h-[2px] bg-[#9a9a9a]" />
          </div>
        </div>

        <div className="pt-[1px]"><Transport /></div>
        <Row3 />
      </div>

      <div className="h-[362px] bg-[#a8aeae] flex flex-col shrink-0">
        <Nav />
        <div className="flex h-[192px]"><Tree /><FileList /></div>
        <Preview />
        <Lower />
      </div>
      <Tabs />
    </div>
  );
}
